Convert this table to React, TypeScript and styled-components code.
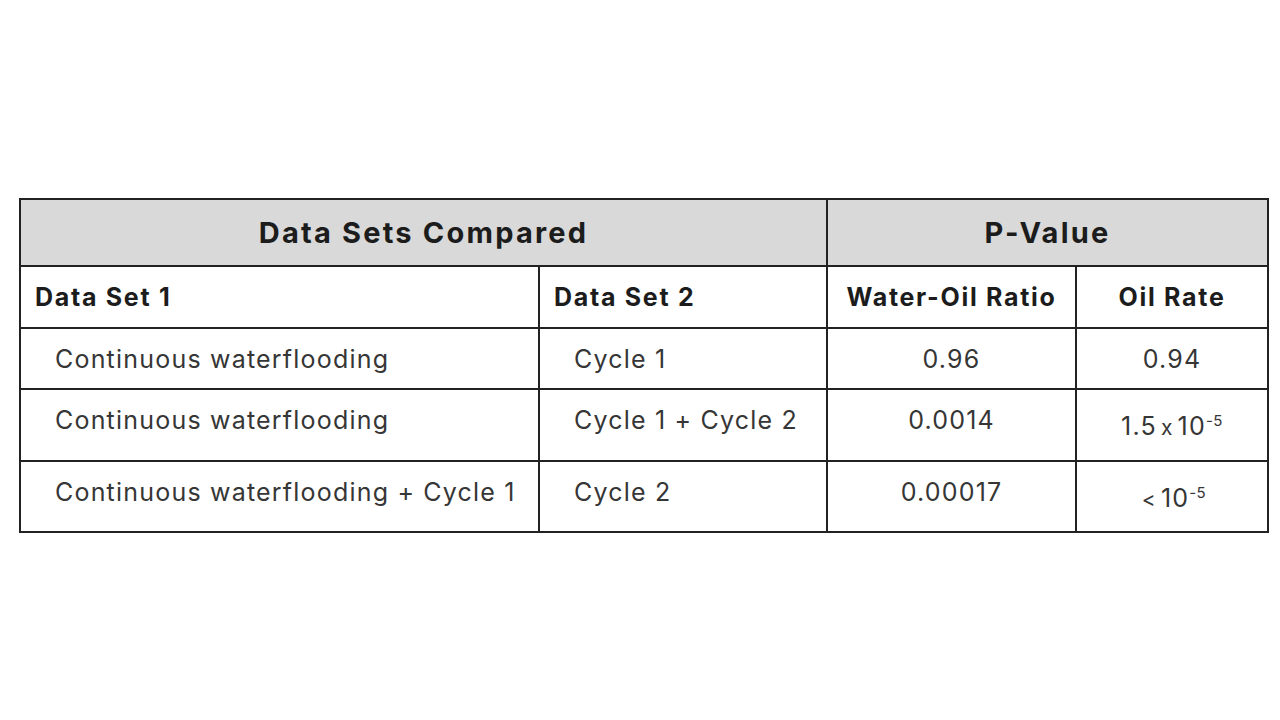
import styled, { createGlobalStyle } from "styled-components";

const GlobalStyle = createGlobalStyle`
  html, body {
    margin: 0;
    padding: 0;
    background: #ffffff;
  }
  body {
    font-family: Inter, "Open Sans", "Liberation Sans", sans-serif;
  }
`;

const Page = styled.div`
  width: 1280px;
  height: 720px;
  box-sizing: border-box;
  padding: 198px 12px 0 19px;
`;

const Table = styled.table`
  border-collapse: collapse;
  table-layout: fixed;
  width: 1248px;
  color: #363636;
`;

const Col = styled.col<{ $w: number }>`
  width: ${(p) => p.$w}px;
`;

const GroupHead = styled.th`
  height: 67px;
  box-sizing: border-box;
  padding: 0;
  background: #d9d9d9;
  border: 2px solid #222222;
  font-size: 29px;
  font-weight: 700;
  letter-spacing: 2.2px;
  color: #1c1c1c;
  text-align: center;
  vertical-align: middle;
`;

const SubHead = styled.th<{ $align?: "left" | "center" }>`
  height: 62px;
  box-sizing: border-box;
  padding: 0 0 0 ${(p) => (p.$align === "center" ? 0 : 14)}px;
  border: 2px solid #222222;
  font-size: 25px;
  font-weight: 700;
  letter-spacing: 1.7px;
  color: #1c1c1c;
  text-align: ${(p) => p.$align ?? "left"};
  vertical-align: middle;
`;

const Cell = styled.td<{ $align?: "left" | "center"; $drop?: boolean; $h: number }>`
  height: ${(p) => p.$h}px;
  box-sizing: border-box;
  padding: ${(p) => (p.$drop ? 21 : 15)}px 0 0
    ${(p) => (p.$align === "center" ? 0 : 34)}px;
  border: 2px solid #222222;
  font-size: 25px;
  line-height: 30px;
  letter-spacing: 1.2px;
  text-align: ${(p) => p.$align ?? "left"};
  vertical-align: top;
`;

const Sup = styled.sup`
  font-size: 15px;
  line-height: 0;
  letter-spacing: 0.5px;
  vertical-align: 9px;
`;

const Times = styled.span`
  font-size: 21px;
  margin: 0 4px;
`;

type Row = {
  a: string;
  b: string;
  wor: string;
  oil: React.ReactNode;
  drop?: boolean;
  h: number;
};

const rows: Row[] = [
  { a: "Continuous waterflooding", b: "Cycle 1", wor: "0.96", oil: "0.94", h: 61 },
  {
    a: "Continuous waterflooding",
    b: "Cycle 1 + Cycle 2",
    wor: "0.0014",
    oil: (
      <>
        1.5<Times>x</Times>10<Sup>-5</Sup>
      </>
    ),
    drop: true,
    h: 72,
  },
  {
    a: "Continuous waterflooding + Cycle 1",
    b: "Cycle 2",
    wor: "0.00017",
    oil: (
      <>
        <Times>&lt;</Times>10<Sup>-5</Sup>
      </>
    ),
    drop: true,
    h: 71,
  },
];

export default function App() {
  return (
    <Page>
      <GlobalStyle />
      <Table>
        <colgroup>
          <Col $w={519} />
          <Col $w={288} />
          <Col $w={249} />
          <Col $w={192} />
        </colgroup>
        <thead>
          <tr>
            <GroupHead colSpan={2}>Data Sets Compared</GroupHead>
            <GroupHead colSpan={2}>P-Value</GroupHead>
          </tr>
          <tr>
            <SubHead>Data Set 1</SubHead>
            <SubHead>Data Set 2</SubHead>
            <SubHead $align="center">Water-Oil Ratio</SubHead>
            <SubHead $align="center">Oil Rate</SubHead>
          </tr>
        </thead>
        <tbody>
          {rows.map((r, i) => (
            <tr key={i}>
              <Cell $h={r.h}>{r.a}</Cell>
              <Cell $h={r.h}>{r.b}</Cell>
              <Cell $h={r.h} $align="center">{r.wor}</Cell>
              <Cell $h={r.h} $align="center" $drop={r.drop}>
                {r.oil}
              </Cell>
            </tr>
          ))}
        </tbody>
      </Table>
    </Page>
  );
}
